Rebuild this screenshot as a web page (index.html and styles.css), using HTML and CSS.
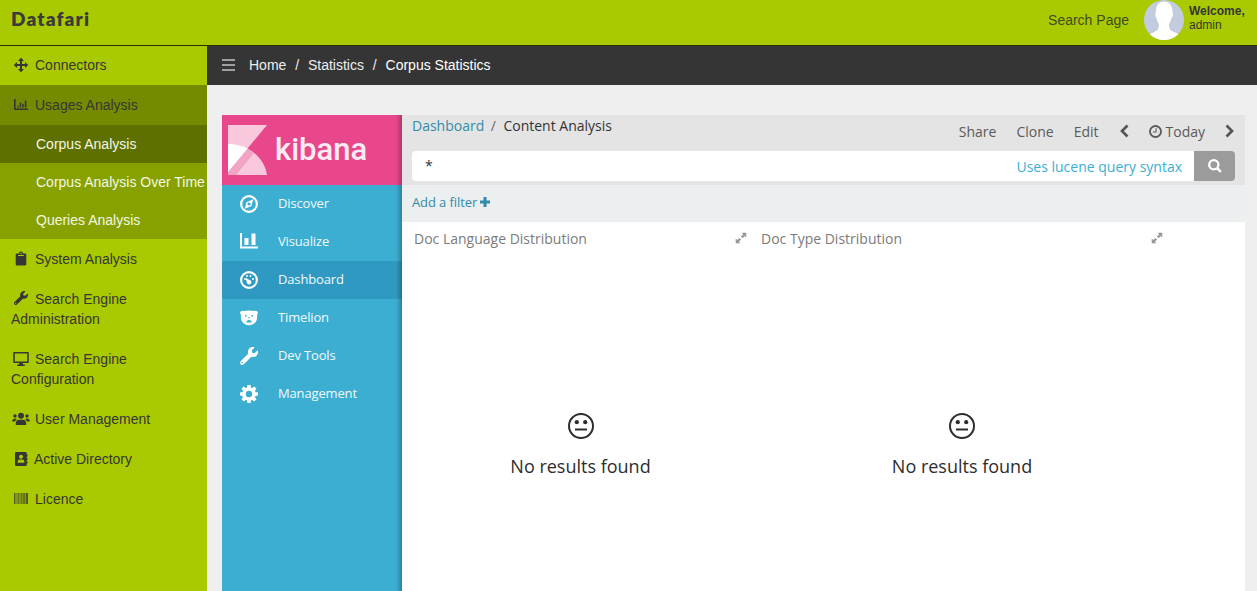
FILE: index.html
```html
<!DOCTYPE html>
<html lang="en">
<head>
<meta charset="utf-8">
<title>Datafari - Corpus Statistics</title>
<link rel="stylesheet" href="styles.css">
</head>
<body>
<svg class="defs" width="0" height="0">
  <symbol id="wrench" viewBox="0 0 512 512"><path d="M507.73 109.1c-2.24-9.03-13.54-12.09-20.12-5.51l-74.36 74.36-67.88-11.31-11.31-67.88 74.36-74.36c6.62-6.62 3.43-17.9-5.66-20.16-47.38-11.74-99.55.91-136.58 37.93-39.64 39.64-50.55 97.1-34.05 147.2L18.74 402.76c-24.99 24.99-24.99 65.51 0 90.5 24.99 24.99 65.51 24.99 90.5 0l213.21-213.21c50.12 16.71 107.47 5.68 147.37-34.22 37.07-37.07 49.7-89.32 37.91-136.73zM64 472c-13.25 0-24-10.75-24-24 0-13.26 10.75-24 24-24s24 10.74 24 24c0 13.25-10.75 24-24 24z"/></symbol>
  <symbol id="expand" viewBox="0 0 12 12"><path d="M6.6.8h4.7v4.700L9.800 4 7.600 6.200 5.900 4.500 8.100 2.300zM5.400 11.300H.7V6.600L2.200 8.100 4.400 5.900 6.100 7.600 3.900 9.800z"/></symbol>
  <symbol id="meh" viewBox="0 0 28 28"><circle cx="14" cy="14" r="12" fill="none" stroke="currentColor" stroke-width="2"/><circle cx="9.800" cy="10.200" r="2.100"/><circle cx="18.200" cy="10.200" r="2.100"/><path d="M8 16.500h12v2H8z"/></symbol>
</svg>
<header class="topbar">
  <div class="brand">Datafari</div>
  <a class="search-page">Search Page</a>
  <svg class="avatar" viewBox="0 0 40 40"><defs><clipPath id="round"><circle cx="20" cy="20" r="20"/></clipPath></defs><g clip-path="url(#round)"><path fill="#c3cbdf" d="M0 0h40v40H0z"/><path fill="#fff" d="M20 1.500c5.500 0 8.800 4.500 8.500 11 .9.500.5 4-1 5.500-.6 3-1.500 4.500-2.500 6 0 4 .6 6 4 7.500 3 1.300 5 2 6.500 4.500V42H5v-6c1.500-2.500 3.500-3.200 6-4.500 3.400-1.500 4-3.500 4-7.500-1.200-1.500-2-3-2.500-6-1.400-1.500-1.500-5-.6-5.500C11.500 6 14.500 1.500 20 1.500z"/></g></svg>
  <div class="welcome"><b>Welcome,</b><br>admin</div>
</header>
<div class="body">
  <nav class="side">
    <a class="item first"><svg class="ic" viewBox="0 0 16 16"><path d="M8 .8 11 4H9v3h3V5l3.200 3L12 11V9H9v3h2l-3 3.200L5 12h2V9H4v2L.8 8 4 5v2h3V4H5z"/></svg>Connectors</a>
    <a class="item open"><svg class="ic" viewBox="0 0 16 16"><path d="M1 2h1.600v9.400H15V13H1zM4.300 8.500h1.400v2H4.300zM6.700 5.500h1.500v5H6.700zM9.200 6.800h1.500v3.700H9.200zM11.800 3.500h1.600v7h-1.600z"/></svg>Usages Analysis</a>
    <div class="sub">
      <a class="current">Corpus Analysis</a>
      <a>Corpus Analysis Over Time</a>
      <a>Queries Analysis</a>
    </div>
    <a class="item"><svg class="ic" viewBox="0 0 16 16"><path fill-rule="evenodd" d="M4 2.500h2a2 2 0 0 1 4 0h2q1.300 0 1.300 1.300v9.400q0 1.300-1.300 1.300H4q-1.300 0-1.300-1.300V3.800Q2.700 2.500 4 2.500zM5.200 4v1h5.600V4zM8 1.800a.7.7 0 1 0 .01 0z"/></svg>System Analysis</a>
    <a class="item"><svg class="ic wrench"><use href="#wrench"/></svg>Search Engine Administration</a>
    <a class="item"><svg class="ic" viewBox="0 0 16 16"><path fill-rule="evenodd" d="M1 1h14q.8 0 .8.800v9.400q0 .8-.8.800H9.700l.4 1.500h1.700V15H4.200v-1.500h1.700l.4-1.500H1q-.8 0-.8-.8V1.800Q.2 1 1 1zm.8 1.500v8h12.400v-8z"/></svg>Search Engine Configuration</a>
    <a class="item"><svg class="ic wide" viewBox="0 0 18 16"><circle cx="9" cy="4.800" r="3"/><circle cx="3" cy="5" r="1.700"/><circle cx="15" cy="5" r="1.700"/><path d="M4.200 14q-.5 0-.5-.8Q3.800 8.800 7 8.800h4q3.200 0 3.300 4.400 0 .8-.5.800zM.2 10.500Q.2 7.700 2 7.700h2q.6 0 1 .4-1.500 1-1.900 2.400zM17.800 10.500Q17.800 7.700 16 7.700h-2q-.6 0-1 .4 1.500 1 1.900 2.400z"/></svg>User Management</a>
    <a class="item tight"><svg class="ic" viewBox="0 0 16 16"><path fill-rule="evenodd" d="M3.300 1h9.400q1 0 1 1v1.500h.8v2h-.8V7h.8v2h-.8v1.500h.8v2h-.8V14q0 1-1 1H3.300q-1.300 0-1.300-1V2q0-1 1.300-1zM8 3.800A2 2 0 1 0 8.010 3.800zM4.600 11.800h6.800Q11.400 8.500 9.300 8.500H6.700Q4.600 8.500 4.600 11.800z"/></svg>Active Directory</a>
    <a class="item"><svg class="ic" viewBox="0 0 16 16"><path opacity=".75" d="M1 2h1v11H1zM13 2h2v11h-2z"/><path opacity=".35" d="M2 2h11v11H2z"/><path opacity=".3" d="M5 2h1v11H5zM8 2h1v11H8zM10 2h2v11h-2z"/></svg>Licence</a>
  </nav>
  <main class="main">
    <div class="crumbs"><svg class="burger" viewBox="0 0 13 12"><path d="M0 0h13v2H0zM0 5h13v2H0zM0 10h13v2H0z"/></svg><span>Home</span><i>/</i><span>Statistics</span><i>/</i><span class="here">Corpus Statistics</span></div>
    <div class="kibana">
      <aside class="knav">
        <div class="klogo"><svg class="kmark" viewBox="0 0 39 50"><path fill="#f9c8dc" d="M0 0h39L0 47z"/><path fill="#f9c8dc" d="M19.500 23.500C30 29 37.500 39 39 50H0v-3z"/><path fill="#f3a3c5" d="M19.500 23.500 26 28 8 50H0v-3z"/><path fill="#fff" d="M0 19c7 0 13.500 1.600 19.500 4.500L0 47z"/></svg><span class="kname">kibana</span></div>
        <a class="kitem"><svg viewBox="0 0 18 18"><circle cx="9" cy="9" r="7.900" fill="none" stroke="#fff" stroke-width="2.100"/><path fill-rule="evenodd" d="M13.200 4.200 11.500 11l-6.700 2.800L6.500 7.200zM9 7.400a1.600 1.600 0 1 0 .01 0z"/></svg><span>Discover</span></a>
        <a class="kitem"><svg viewBox="0 0 18 18"><path d="M0 0h2v13.500h16v2H0zM4.500 5h4v7h-4zM11.500.5h4V12h-4z"/></svg><span>Visualize</span></a>
        <a class="kitem on"><svg viewBox="0 0 18 18"><circle cx="9" cy="9" r="7.900" fill="none" stroke="#fff" stroke-width="2.100"/><circle cx="5" cy="8" r="1"/><circle cx="7" cy="5" r="1"/><circle cx="10.500" cy="5" r="1"/><circle cx="13" cy="8" r="1"/><path d="M5.600 6.700 9.500 9q2.200.5 2 2.300-.5 2.300-2.500 2.200-2.300-.2-2.300-2.300z"/></svg><span>Dashboard</span></a>
        <a class="kitem"><svg viewBox="0 0 18 18"><path fill-rule="evenodd" d="M.5 2.500Q2.500 1 4.500 2.100q4.500-1.300 9 0Q15.500 1 17.500 2.500q.9 2-.5 3.500.7 4-1.200 6.800-2.400 3.400-6.800 3.400t-6.800-3.400Q.3 10 1 6-.4 4.500.5 2.500zM5.800 6a.8.800 0 1 0 .01 0zM12.200 6a.8.800 0 1 0 .01 0zM7.500 8.300 9 9.500l1.500-1.200zM6.500 12v1.500h5V12L9 10.800z"/></svg><span>Timelion</span></a>
        <a class="kitem"><svg><use href="#wrench"/></svg><span>Dev Tools</span></a>
        <a class="kitem"><svg viewBox="0 0 18 18"><circle cx="9" cy="9" r="5" fill="none" stroke="#fff" stroke-width="3.600"/><path d="M7.400 0h3.200l.6 4H6.800zM7.400 18h3.200l.6-4H6.800zM0 7.400v3.200l4 .6V6.800zM18 7.400v3.200l-4 .6V6.800zM1.500 3.800l2.300-2.300L7 3.900 3.900 7zM16.500 3.800l-2.300-2.300L11 3.900 14.100 7zM1.500 14.200l2.300 2.300L7 14.100 3.900 11zM16.500 14.200l-2.300 2.300-3.200-2.400 3.100-3.100z"/></svg><span>Management</span></a>
      </aside>
      <section class="dash">
        <div class="khead">
          <div class="row">
            <div class="path"><a>Dashboard</a><i>/</i>Content Analysis</div>
            <div class="tools"><span class="share">Share</span><span class="clone">Clone</span><span class="edit">Edit</span>
              <svg class="chev" viewBox="0 0 9 14"><path d="M7.500 1.500 2 7l5.500 5.500" fill="none" stroke="#555" stroke-width="2.700"/></svg>
              <svg class="clock" viewBox="0 0 12 12"><circle cx="6" cy="6" r="5.100" fill="none" stroke="#5a5a5a" stroke-width="1.700"/><path d="M6.500 3v3.500h-3" fill="none" stroke="#5a5a5a"/></svg><span class="today">Today</span>
              <svg class="chev" viewBox="0 0 9 14"><path d="M1.500 1.500 7 7l-5.500 5.500" fill="none" stroke="#555" stroke-width="2.700"/></svg>
            </div>
          </div>
          <div class="query"><div class="field"><span class="star">*</span><a>Uses lucene query syntax</a></div><div class="go"><svg viewBox="0 0 14 14"><circle cx="5.800" cy="5.800" r="4.600" fill="none" stroke="#fff" stroke-width="2.300"/><path d="m9 9 3.800 3.800" stroke="#fff" stroke-width="2.600"/></svg></div></div>
        </div>
        <div class="filter"><span>Add a filter</span><svg viewBox="0 0 10 10"><path d="M3.500 0h3v3.500H10v3H6.500V10h-3V6.500H0v-3h3.500z"/></svg></div>
        <div class="panels">
          <article class="panel one"><div class="ptitle">Doc Language Distribution<svg><use href="#expand"/></svg></div><div class="empty"><svg><use href="#meh"/></svg><p>No results found</p></div></article>
          <article class="panel two"><div class="ptitle">Doc Type Distribution<svg><use href="#expand"/></svg></div><div class="empty"><svg><use href="#meh"/></svg><p>No results found</p></div></article>
        </div>
      </section>
    </div>
  </main>
</div>
</body>
</html>
```
FILE: styles.css
```css
* { box-sizing: border-box; }
body { margin: 0; height: 591px; overflow: hidden; background: #efefef; color: #363636; font: 14px/20px "Liberation Sans", Arial, sans-serif; display: flex; flex-direction: column; }
svg { fill: currentColor; flex: none; }
i { font-style: normal; }
.defs { display: none; }
.topbar { height: 46px; flex: none; background: #a9ca00; border-bottom: 1px solid #2a3000; display: flex; align-items: flex-start; padding-left: 11px; }
.brand { font: 800 19px/22px Lato, sans-serif; color: #3b3b38; padding-top: 8px; letter-spacing: 1.15px; flex: 1; }
.search-page { padding-top: 10px; margin-right: 15px; color: #414a20; }
.avatar { width: 40px; height: 40px; }
.welcome { width: 73px; padding: 4px 0 0 5px; font-size: 12px; line-height: 14px; white-space: nowrap; }
.body { flex: 1; display: flex; min-height: 0; }
.side { width: 207px; flex: none; background: #a9ca00; }
.item { display: block; padding: 10px 40px 10px 11px; }
.item.first { padding-top: 9px; }
.item.open { background: #748b00; }
.ic { width: 16px; height: 16px; margin: 0 6px 0 2px; vertical-align: -3px; }
.ic.wrench { width: 14px; height: 14px; margin: 0 7px 0 3px; vertical-align: -1px; }
.ic.wide { width: 18px; margin: 0 5px 0 1px; }
.tight .ic { margin-right: 5px; }
.sub { background: #87a200; color: #f3f6e4; }
.sub a { display: block; height: 38px; line-height: 38px; padding-left: 36px; white-space: nowrap; }
.sub .current { background: #5e7000; }
.main { flex: 1; min-width: 0; display: flex; flex-direction: column; }
.crumbs { height: 39px; flex: none; background: #353535; color: #eee; display: flex; align-items: center; padding: 0 0 1px 15px; }
.burger { width: 13px; height: 12px; margin-right: 14px; color: #a0a0a0; }
.crumbs i { width: 21.600px; text-align: center; }
.crumbs .here { color: #fff; }
.kibana { flex: 1; margin: 30px 12px 0 15px; display: flex; font-family: "Open Sans", sans-serif; min-height: 0; }
.knav { width: 180px; background: linear-gradient(to right, transparent 174px, rgba(0,0,0,.25)), #3caed2; color: #fff; font-size: 13px; }
.klogo { height: 70px; display: flex; background: linear-gradient(to right, transparent 174px, rgba(0,0,0,.25)), #e8488b; padding: 10px 0 0 6px; }
.kmark { width: 39px; height: 50px; }
.kname { font: 500 31px/36px Roboto, sans-serif; color: #fdeaf2; margin: 7px 0 0 8px; }
.kitem { display: flex; align-items: center; height: 38px; padding-left: 18px; gap: 20px; color: #f0f9fc; }
.kitem span { padding-bottom: 2px; letter-spacing: -.15px; }
.kitem svg { width: 18px; height: 18px; color: #fff; }
.kitem.on { background: linear-gradient(to right, transparent 174px, rgba(0,0,0,.25)), #2f99c1; }
.dash { flex: 1; min-width: 0; background: #fff; display: flex; flex-direction: column; }
.khead { height: 70px; background: #e4e4e4; padding: 0 10px; }
.row { height: 36px; display: flex; justify-content: space-between; }
.path { padding-top: 1px; color: #333; }
.path a, .filter { color: #328caa; }
.path i { margin: 0 7.500px 0 6.500px; color: #666; }
.tools { display: flex; align-items: flex-start; padding: 7px 1px 0 0; color: #5a5a5a; }
.share, .clone { margin-right: 20px; }
.edit { margin-right: 21px; }
.chev { width: 9px; height: 14px; margin-top: 2px; }
.clock { width: 13px; height: 13px; margin: 3px 4px 0 20px; }
.today { margin-right: 20px; }
.query { display: flex; height: 30px; }
.field { flex: 1; display: flex; justify-content: space-between; background: #fff; border-radius: 4px 0 0 4px; padding: 6px 12px 0 13px; }
.field a { color: #3caed2; }
.star { line-height: 18px; }
.go { width: 41px; background: #9b9b9b; border-radius: 0 4px 4px 0; display: flex; align-items: center; justify-content: center; }
.go svg { width: 14px; height: 14px; }
.filter { height: 37px; background: #ebeff0; padding: 0 10px 3px; display: flex; align-items: center; font-size: 13px; }
.filter span { letter-spacing: -.1px; }
.filter svg { width: 10px; height: 10px; margin-left: 3px; }
.panels { flex: 1; display: flex; padding-left: 12px; }
.panel.one { width: 347px; }
.panel.two { width: 405px; }
.ptitle { display: flex; justify-content: space-between; color: #7b7b7b; padding-top: 7px; }
.ptitle svg { width: 12px; height: 12px; margin-top: 3px; color: #9a9a9a; }
.one .ptitle { padding-right: 14px; }
.two .ptitle { padding-right: 3px; }
.empty { display: flex; flex-direction: column; align-items: center; padding-top: 163px; color: #2d2d2d; font-size: 18px; }
.one .empty { padding-right: 14px; }
.two .empty { padding-right: 3px; }
.empty svg { width: 28px; height: 28px; }
.empty p { margin: 16px 0 0; line-height: 20px; }
```
